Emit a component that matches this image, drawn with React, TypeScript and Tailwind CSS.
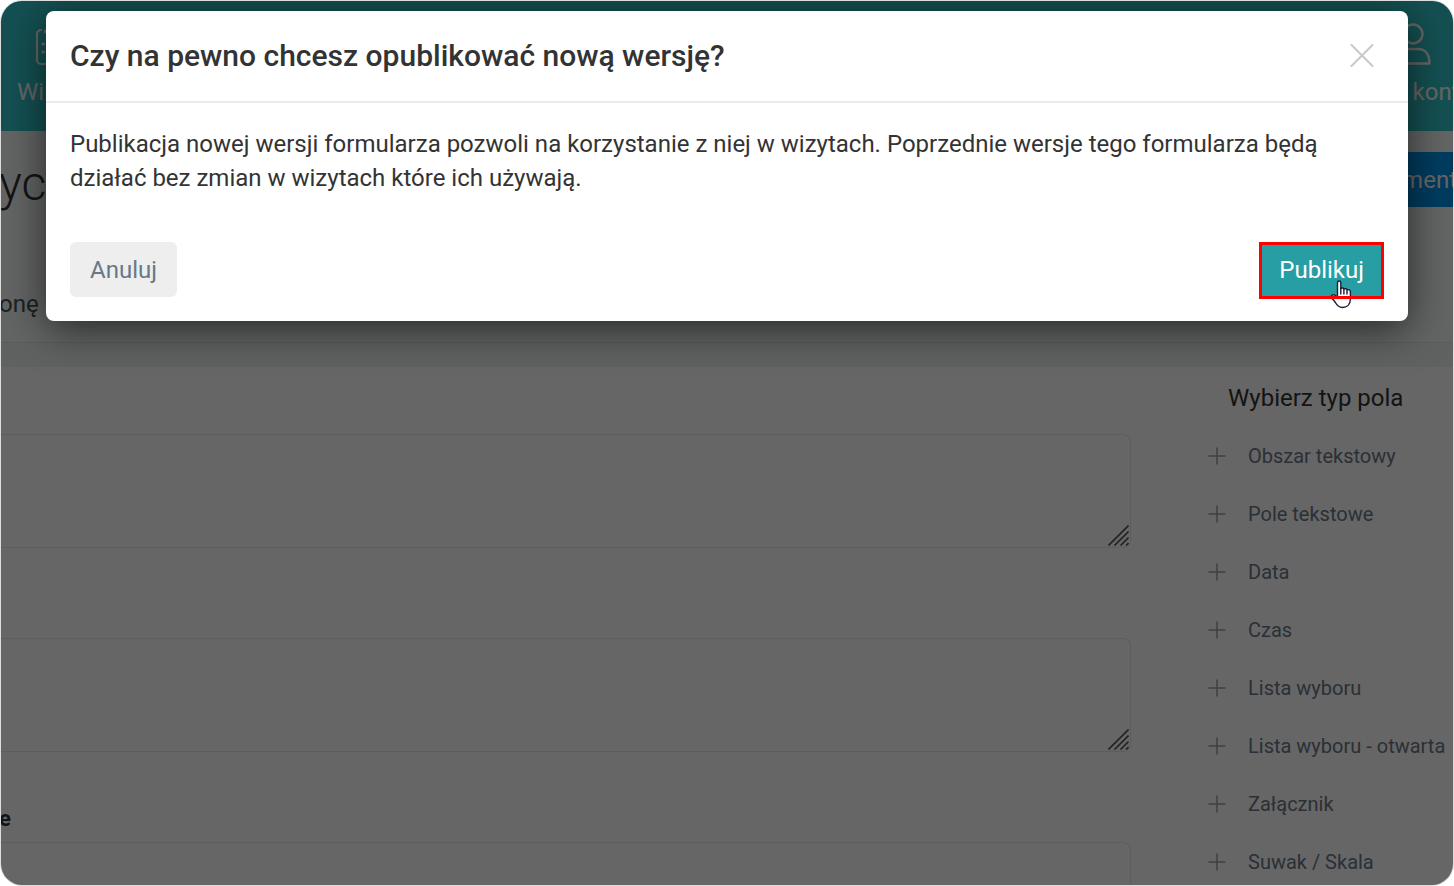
import type { ReactNode } from "react";

const FIELD_TYPES = [
  "Obszar tekstowy",
  "Pole tekstowe",
  "Data",
  "Czas",
  "Lista wyboru",
  "Lista wyboru - otwarta",
  "Załącznik",
  "Suwak / Skala",
];

function ClipboardIcon() {
  return (
    <svg width="34" height="38" viewBox="0 0 34 38" fill="none" stroke="currentColor" strokeWidth="2.2" strokeLinecap="round">
      <path d="M6 2a4 4 0 0 0-4 4v26a4 4 0 0 0 4 4h22a4 4 0 0 0 4-4V6a4 4 0 0 0-4-4" />
      <path d="M10 4.500V2.500M14 3h8M13 16h14M13 24h14" />
      <path d="M8 16h.5M8 24h.5" strokeWidth="3.5" />
    </svg>
  );
}

function UserIcon() {
  return (
    <svg width="36" height="44" viewBox="0 0 36 44" fill="none" stroke="currentColor" strokeWidth="2.4" strokeLinejoin="round">
      <circle cx="18" cy="12" r="9.5" />
      <path d="M2.500 41.500c0-9 4-14.500 11.500-14.500h9c7.500 0 11.500 5.500 11.500 14.500z" />
    </svg>
  );
}

function PlusIcon() {
  return (
    <svg className="shrink-0 text-[#a0a0a0]" width="18" height="18" viewBox="0 0 18 18" stroke="currentColor" strokeWidth="1.5">
      <path d="M9 .5v17M.5 9h17" />
    </svg>
  );
}

function HandCursor() {
  return (
    <svg className="pointer-events-none absolute -bottom-3 left-[71px]" width="24" height="30" viewBox="0 0 24 30">
      <path
        d="M7.500 3.500C7.500 1.400 10.800 1.400 10.800 3.500V9.500C11.800 8.600 13.600 8.900 13.900 10 15.100 9.300 16.700 9.700 17 10.900 18.600 10.300 20.400 10.900 20.400 12.500V20C20.400 25.500 17 28.500 12.500 28.500 9 28.500 7 26.500 5.400 23.500L1.400 18.500C.6 16.600 3 15 4.800 16.200L7.500 18.500Z"
        fill="#fff"
        stroke="#1d1d35"
        strokeWidth="1.4"
        strokeLinejoin="round"
      />
      <path d="M10.800 9.500v5.500M13.900 10v5M17 10.900v4.100" stroke="#1d1d35" strokeWidth="1.4" strokeLinecap="round" />
    </svg>
  );
}

function NavItem({ icon, label }: { icon: ReactNode; label: string }) {
  return (
    <a href="#" className="flex flex-col items-center text-2xl leading-8 whitespace-nowrap text-white">
      <span className="flex h-12 items-end">{icon}</span>
      <span className="mt-2.5">{label}</span>
    </a>
  );
}

function FieldBox({ label }: { label: string }) {
  return (
    <div className="relative h-[114px] shrink-0">
      <textarea
        aria-label={label}
        className="block h-full w-full resize-none rounded-r-lg border border-l-0 border-[#e8e8e8] bg-transparent"
      />
      <svg className="pointer-events-none absolute right-0.5 bottom-0.5 text-[#555]" width="21" height="21" viewBox="0 0 21 21" stroke="currentColor" strokeWidth="1.6">
        <path d="M.5 20.500l20-20M6.500 20.500l14-14M12.500 20.500l8-8M18 20.500l2.500-2.500" />
      </svg>
    </div>
  );
}

function ConfirmDialog() {
  return (
    <div
      role="dialog"
      aria-modal="true"
      aria-labelledby="dialog-title"
      className="rounded-lg bg-white text-[#333] shadow-[0_8px_40px_rgba(0,0,0,0.6)]"
    >
      <div className="flex items-center justify-between border-b-2 border-[#ebebeb] py-6 pr-8 pl-6">
        <h2 id="dialog-title" className="text-3xl leading-[42px] font-medium">
          Czy na pewno chcesz opublikować nową wersję?
        </h2>
        <button type="button" aria-label="Zamknij" className="text-[#c8c8c8]">
          <svg width="28" height="28" viewBox="0 0 28 28" stroke="currentColor" strokeWidth="2" strokeLinecap="round">
            <path d="M3.500 3l21 21M24.500 3l-21 21" />
          </svg>
        </button>
      </div>
      <p className="px-6 pt-6 text-2xl leading-[34px]">
        Publikacja nowej wersji formularza pozwoli na korzystanie z niej w wizytach. Poprzednie wersje tego formularza będą
        działać bez zmian w wizytach które ich używają.
      </p>
      <div className="flex items-center justify-between px-6 pt-[47px] pb-6">
        <button type="button" className="h-[55px] rounded-md bg-[#eee] px-5 text-2xl text-[#687888]">
          Anuluj
        </button>
        <div className="relative">
          <button type="button" className="block h-[55px] rounded-md bg-[#279ea3] px-5 text-2xl text-white">
            Publikuj
          </button>
          <HandCursor />
          <span className="pointer-events-none absolute inset-x-0 top-0 -bottom-0.5 border-[3px] border-[#f00]" />
        </div>
      </div>
    </div>
  );
}

export default function App() {
  return (
    <div className="h-screen bg-white font-[Roboto,sans-serif]">
      <div className="relative flex h-full flex-col overflow-hidden rounded-[22px] border border-[#ddd] bg-white">
        <header className="flex h-[130px] shrink-0 items-start justify-between bg-[#32c8cd] pt-[17px] pl-4">
          <NavItem icon={<ClipboardIcon />} label="Wizyty" />
          <div className="-mr-5">
            <NavItem icon={<UserIcon />} label="Moje konto" />
          </div>
        </header>

        <section className="h-[212px] shrink-0 border-b border-[#e4e6e6] bg-[#f8fbfa] pt-[21px]">
          <div className="flex h-[55px] items-center justify-between">
            <h1 className="-ml-0.5 pt-2 text-5xl leading-none font-light text-[#333]">yc</h1>
            <button type="button" className="-mr-1 h-[55px] bg-[#0096ed] pl-6 text-2xl text-white">
              ment
            </button>
          </div>
          <p className="-ml-0.5 pt-[79px] text-2xl leading-9 text-[#46525e]">onę</p>
        </section>
        <div className="h-6 shrink-0 bg-[#eff4f3]" />

        <main className="flex min-h-0 flex-1">
          <div className="flex flex-1 flex-col pt-[67px]">
            <FieldBox label="Pole 1" />
            <div className="h-[90px] shrink-0" />
            <FieldBox label="Pole 2" />
            <p className="-ml-0.5 pt-[59px] pb-[15px] text-[22px] leading-4 font-bold text-[#2c3640]">e</p>
            <FieldBox label="Pole 3" />
          </div>
          <aside className="ml-[77px] w-[245px] shrink-0">
            <h2 className="pt-[15px] pl-5 text-2xl leading-8 text-[#333]">Wybierz typ pola</h2>
            <ul className="mt-[13px]">
              {FIELD_TYPES.map((name) => (
                <li key={name}>
                  <button type="button" className="flex h-[58px] items-center gap-[22px] text-xl whitespace-nowrap text-[#6b7988]">
                    <PlusIcon />
                    {name}
                  </button>
                </li>
              ))}
            </ul>
          </aside>
        </main>

        <div className="absolute inset-0 bg-black/60 px-[45px] pt-2.5">
          <ConfirmDialog />
        </div>
      </div>
    </div>
  );
}
